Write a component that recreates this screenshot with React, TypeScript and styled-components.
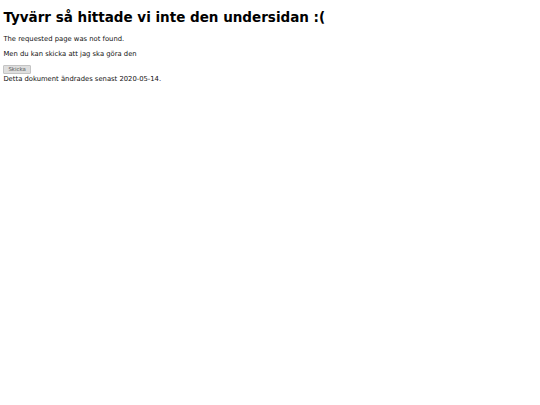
import styled, { createGlobalStyle } from "styled-components";

const GlobalStyle = createGlobalStyle`
    html, body {
        margin: 0;
        padding: 0;
        background: #ffffff;
    }
    body {
        padding: 3.4px;
        font-family: "DejaVu Sans", Verdana, sans-serif;
        font-size: 6.8px;
        color: #111111;
    }
`;

const Page = styled.div`
    display: flex;
    flex-direction: column;
`;

const Heading = styled.h1`
    font-size: 13.5px;
    font-weight: bold;
    line-height: 1.15;
    margin: 7px 0 9px 0;
    color: #000000;
`;

const Text = styled.p`
    margin: 0 0 7px 0;
    line-height: 8px;
`;

const SendButton = styled.button`
    align-self: flex-start;
    font-family: "DejaVu Sans", Verdana, sans-serif;
    font-size: 5.4px;
    line-height: 6px;
    color: #555555;
    background: #dedede;
    border: 1px solid #c4c4c4;
    border-radius: 1px;
    padding: 0.5px 4px;
    margin: 0 0 1.5px 0;
`;

const Footer = styled.div`
    line-height: 8px;
`;

const App = () => {
    return (
        <Page>
            <GlobalStyle />
            <Heading>Tyvärr så hittade vi inte den undersidan :(</Heading>
            <Text>The requested page was not found.</Text>
            <Text>Men du kan skicka att jag ska göra den</Text>
            <SendButton type="button">Skicka</SendButton>
            <Footer>Detta dokument ändrades senast 2020-05-14.</Footer>
        </Page>
    );
};

export default App;
